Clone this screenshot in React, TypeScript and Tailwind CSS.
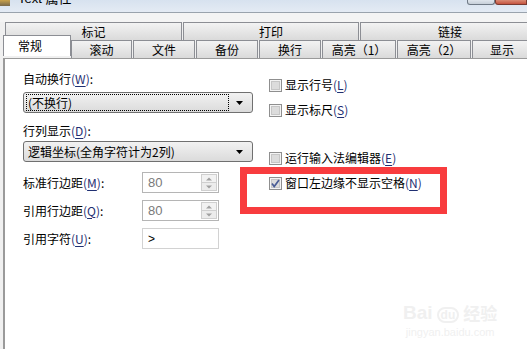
import React from 'react';

const font = { fontFamily: '"Noto Sans CJK SC", "Microsoft YaHei", sans-serif' };

function Accel({ text, k }: { text: string; k: string }) {
  return (
    <span className="whitespace-nowrap">
      {text}
      <span className="text-[#1f2f72]">
        (<span className="underline underline-offset-2">{k}</span>)
      </span>
    </span>
  );
}

function CheckBox({ checked }: { checked?: boolean }) {
  return (
    <svg width="13" height="13" viewBox="0 0 13 13" className="shrink-0">
      <rect x="0.5" y="0.5" width="12" height="12" fill="#f4f4f4" stroke="#8f8f8f" />
      <rect x="2.5" y="2.5" width="8" height="8" fill="#dcdcdc" stroke="#c6c6c6" />
      {checked && <path d="M3 6.5 L5.2 9.5 L10 3" fill="none" stroke="#4a5d96" strokeWidth="1.7" />}
    </svg>
  );
}

function Check({ label, k, checked }: { label: string; k: string; checked?: boolean }) {
  return (
    <div className="flex items-center gap-[3px] h-4 text-[12px] leading-4 text-black">
      <CheckBox checked={checked} />
      <Accel text={label} k={k} />
    </div>
  );
}

function Combo({ children, focus }: { children: React.ReactNode; focus?: boolean }) {
  return (
    <div className="flex items-center h-[21px] w-[230px] rounded-[3px] border border-[#707070] bg-gradient-to-b from-[#f2f2f2] to-[#dbdbdb] pl-[2px] pr-[5px]">
      <div className={`flex-1 h-[17px] flex items-center pl-px text-[12px] leading-4 text-black ${focus ? 'border border-dotted border-black' : 'border border-transparent'}`}>
        {children}
      </div>
      <svg width="14" height="8" viewBox="0 0 14 8" className="ml-[4px]">
        <path d="M3 2 H10 L6.5 6 Z" fill="#000" />
      </svg>
    </div>
  );
}

function Spin({ value }: { value: string }) {
  return (
    <div className="flex items-center h-[21px] w-[77px] border border-[#b5b5b5] bg-white pl-[5px] pr-px">
      <span className="flex-1 text-[13px] leading-4 text-[#7a7a7a]" style={{ fontFamily: '"Liberation Sans", Arial, sans-serif' }}>{value}</span>
      <div className="flex flex-col w-[16px] h-[17px]">
        <div className="flex-1 border border-[#cfcfcf] bg-[#f2f2f2] flex items-center justify-center">
          <svg width="6" height="4" viewBox="0 0 6 4"><path d="M0 3.5 L3 0.5 L6 3.5Z" fill="#a0a0a0" /></svg>
        </div>
        <div className="flex-1 border border-t-0 border-[#cfcfcf] bg-[#ececec] flex items-center justify-center">
          <svg width="6" height="4" viewBox="0 0 6 4"><path d="M0 0.5 L3 3.5 L6 0.5Z" fill="#a0a0a0" /></svg>
        </div>
      </div>
    </div>
  );
}

const row1 = [
  { t: '标记', w: 'w-[177px]' },
  { t: '打印', w: 'w-[176px]' },
  { t: '链接', w: 'w-[180px]' },
];

const row2 = [
  { t: '滚动', w: 'w-[61px]' },
  { t: '文件', w: 'w-[62px]' },
  { t: '备份', w: 'w-[62px]' },
  { t: '换行', w: 'w-[62px]' },
  { t: '高亮（1）', w: 'w-[74px]' },
  { t: '高亮（2）', w: 'w-[74px]' },
  { t: '显示', w: 'w-[60px]' },
];

const tabCls =
  'h-full flex items-center justify-center border border-b-0 border-[#8c8e94] bg-gradient-to-b from-[#f3f3f3] to-[#dadada] text-[12px] leading-4 text-black shrink-0';

export default function App() {
  return (
    <div className="w-[527px] h-[349px] overflow-hidden bg-[#f0f0f0] flex flex-col relative" style={font}>
      {/* title bar */}
      <div className="h-[13px] shrink-0 flex items-start bg-gradient-to-b from-[#d7e2ef] to-[#e4ebf4] border-b border-[#9aa3ad]">
        <div className="w-[10px] h-[6px] bg-gradient-to-b from-[#caa24a] to-[#7a6a4a]" />
        <span className="ml-[8px] -mt-[9px] text-[13px] leading-4 text-black" style={{ fontFamily: '"Liberation Sans", "Noto Sans CJK SC", sans-serif' }}>Text 属性</span>
        <div className="ml-auto flex">
          <div className="w-[28px] h-[5px] rounded-b-[3px] border border-t-0 border-[#707a86] bg-gradient-to-b from-[#dfe5ec] to-[#c7cfd9]" />
          <div className="w-[32px] h-[5px] rounded-bl-[3px] border border-t-0 border-[#7a3a30] bg-gradient-to-b from-[#d98a74] to-[#c4533f]" />
        </div>
      </div>

      <div className="h-[9px] shrink-0 bg-[#f4f4f4]" />

      {/* tab row 1 */}
      <div className="h-[18px] shrink-0 flex pl-[5px] gap-px">
        {row1.map((t) => (
          <div key={t.t} className={`${tabCls} ${t.w}`}>{t.t}</div>
        ))}
      </div>

      {/* tab row 2 */}
      <div className="h-[18px] shrink-0 flex items-end pl-[3px] relative z-10">
        <div className="h-[21px] w-[68px] -mt-[3px] shrink-0 border border-b-0 border-[#8c8e94] bg-white flex items-center pl-[14px] text-[12px] leading-4 text-black self-start -translate-y-[2px] mb-[-3px]">
          常规
        </div>
        <div className="flex h-full gap-px">
          {row2.map((t) => (
            <div key={t.t} className={`${tabCls} ${t.w}`}>{t.t}</div>
          ))}
        </div>
      </div>

      {/* panel */}
      <div className="flex-1 ml-[3px] bg-white border-l-2 border-t border-[#9a9a9a] flex relative">
        <div className="w-[231px] ml-[18px] flex flex-col text-[12px] leading-4 text-black">
          <div className="mt-[12px]"><Accel text="自动换行" k="W" />:</div>
          <div className="mt-[5px]"><Combo focus>(不换行)</Combo></div>
          <div className="mt-[10px]"><Accel text="行列显示" k="D" />:</div>
          <div className="mt-[2px]"><Combo>逻辑坐标(全角字符计为2列)</Combo></div>
          <div className="mt-[10px] flex items-center">
            <span className="w-[119px]"><Accel text="标准行边距" k="M" />:</span>
            <Spin value="80" />
          </div>
          <div className="mt-[7px] flex items-center">
            <span className="w-[119px]"><Accel text="引用行边距" k="Q" />:</span>
            <Spin value="80" />
          </div>
          <div className="mt-[7px] flex items-center">
            <span className="w-[119px]"><Accel text="引用字符" k="U" />:</span>
            <div className="h-[21px] w-[77px] border border-[#d2d2d2] bg-white pl-[5px] flex items-center text-[12px]" style={{ fontFamily: '"Liberation Sans", Arial, sans-serif' }}>&gt;</div>
          </div>
        </div>

        <div className="ml-[15px] flex flex-col">
          <div className="mt-[18px]"><Check label="显示行号" k="L" /></div>
          <div className="mt-[9px]"><Check label="显示标尺" k="S" /></div>
          <div className="mt-[32px]"><Check label="运行输入法编辑器" k="E" /></div>
          <div className="-ml-[29px] mt-px w-[207px] h-[47px] border-[7px] border-[#f83c3e] pl-[22px] pt-px">
            <Check label="窗口左边缘不显示空格" k="N" checked />
          </div>
        </div>

        {/* watermark */}
        <div className="absolute left-[398px] top-[244px] flex flex-col items-center text-[#f0f0f0] select-none">
          <div className="flex items-end gap-1 leading-5">
            <span className="text-[19px] font-bold" style={{ fontFamily: '"Liberation Sans", sans-serif' }}>Bai</span>
            <span className="text-[12px] font-bold border-2 border-[#f0f0f0] rounded-full px-[2px] leading-3" style={{ fontFamily: '"Liberation Sans", sans-serif' }}>du</span>
            <span className="text-[17px] font-bold">经验</span>
          </div>
          <span className="text-[11px] leading-3 mt-[3px]" style={{ fontFamily: '"Liberation Sans", sans-serif' }}>jingyan.baidu.com</span>
        </div>
      </div>
    </div>
  );
}
